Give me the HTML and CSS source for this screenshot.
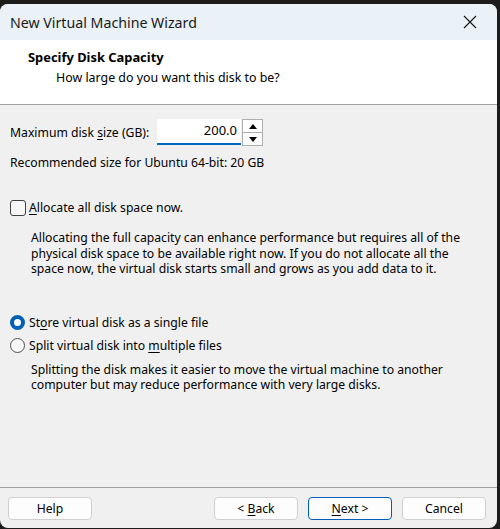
FILE: index.html
```html
<!DOCTYPE html>
<html lang="en">
<head>
  <meta charset="UTF-8" />
  <title>New Virtual Machine Wizard</title>
  <link rel="stylesheet" href="styles.css">
</head>
<body>
  <div class="window">
    <div class="titlebar">
      <span class="title">New Virtual Machine Wizard</span>
      <svg class="close" width="14" height="14" viewBox="0 0 14 14">
        <path d="M1 1 L13 13 M13 1 L1 13" stroke="#1a1a1a" stroke-width="1.2" fill="none"/>
      </svg>
    </div>

    <div class="header">
      <div class="heading">Specify Disk Capacity</div>
      <div class="subheading">How large do you want this disk to be?</div>
    </div>

    <div class="content">
      <div class="size-row">
        <span>Maximum disk <u>s</u>ize (GB):</span>
        <div class="spin">
          <div class="spin-input">200.0</div>
          <div class="spin-buttons">
            <div class="spin-btn"><span class="tri-up"></span></div>
            <div class="spin-btn"><span class="tri-down"></span></div>
          </div>
        </div>
      </div>
      <p class="recommend">Recommended size for Ubuntu 64-bit: 20 GB</p>

      <div class="option check-row">
        <span class="checkbox"></span>
        <span><u>A</u>llocate all disk space now.</span>
      </div>
      <p class="note">Allocating the full capacity can enhance performance but requires all of the physical disk space to be available right now. If you do not allocate all the space now, the virtual disk starts small and grows as you add data to it.</p>

      <div class="option radio-first">
        <span class="radio checked"></span>
        <span>St<u>o</u>re virtual disk as a single file</span>
      </div>
      <div class="option radio-second">
        <span class="radio"></span>
        <span>Split virtual disk into <u>m</u>ultiple files</span>
      </div>
      <p class="note note-split">Splitting the disk makes it easier to move the virtual machine to another computer but may reduce performance with very large disks.</p>
    </div>

    <div class="footer">
      <button class="btn">Help</button>
      <div class="nav">
        <button class="btn">&lt; <u>B</u>ack</button>
        <button class="btn default"><u>N</u>ext &gt;</button>
        <button class="btn">Cancel</button>
      </div>
    </div>
  </div>
</body>
</html>
```

FILE: styles.css
```css
html, body {
  margin: 0;
  padding: 0;
  background: #1c1c1c;
  height: 529px;
  overflow: hidden;
}
body {
  font-family: "Noto Sans", "Liberation Sans", sans-serif;
  font-size: 12.2px;
  color: #000;
}
u {
  text-decoration-thickness: 1px;
  text-underline-offset: 2px;
}
.window {
  margin-top: 4px;
  width: 497px;
  height: 524px;
  border-radius: 8px;
  background: #f0f0f0;
  overflow: hidden;
  display: flex;
  flex-direction: column;
}
.titlebar {
  height: 36px;
  background: #eaf1f7;
  display: flex;
  align-items: center;
  justify-content: space-between;
  padding: 0 20px 0 10px;
}
.title {
  font-size: 14.2px;
  color: #1a1a1a;
}
.header {
  height: 64px;
  background: #fff;
  border-bottom: 1px solid #a0a0a0;
  padding: 0 0 0 28px;
  box-sizing: content-box;
}
.heading {
  font-weight: bold;
  font-size: 12.9px;
  margin-top: 9px;
  line-height: 17px;
}
.subheading {
  margin: 3px 0 0 28px;
  line-height: 17px;
  font-size: 12.4px;
}
.content {
  flex: 1;
  padding: 14px 10px 0 10px;
}
.size-row {
  display: flex;
  align-items: center;
}
.size-row > span {
  width: 147px;
}
.spin {
  display: flex;
}
.spin-input {
  width: 80px;
  height: 24px;
  background: #fff;
  border-bottom: 2px solid #0067c0;
  text-align: right;
  padding-right: 4px;
  line-height: 22px;
  font-size: 13px;
}
.spin-buttons {
  display: flex;
  flex-direction: column;
  margin-left: 1px;
  border: 1px solid #adadad;
  width: 19px;
  height: 25px;
}
.spin-btn {
  flex: 1;
  background: #fdfdfd;
  display: flex;
  align-items: center;
  justify-content: center;
}
.spin-btn + .spin-btn {
  border-top: 1px solid #adadad;
}
.tri-up {
  border-left: 4px solid transparent;
  border-right: 4px solid transparent;
  border-bottom: 5px solid #000;
}
.tri-down {
  border-left: 4px solid transparent;
  border-right: 4px solid transparent;
  border-top: 5px solid #000;
}
.recommend {
  margin: 8px 0 0 0;
  line-height: 17px;
}
.option {
  display: flex;
  align-items: center;
  line-height: 17px;
}
.check-row {
  margin-top: 28px;
}
.checkbox {
  width: 14px;
  height: 14px;
  border: 1px solid #404040;
  border-radius: 3px;
  background: #f7f7f7;
  margin-right: 3px;
}
.radio {
  box-sizing: border-box;
  width: 15px;
  height: 15px;
  border: 1px solid #505050;
  border-radius: 50%;
  background: #f7f7f7;
  margin-right: 4px;
}
.radio.checked {
  border: 4.5px solid #005fb8;
  background: #fff;
}
.note {
  margin: 14px 0 0 21px;
  line-height: 15.5px;
  width: 446px;
}
.radio-first {
  margin-top: 37px;
}
.radio-second {
  margin-top: 6px;
}
.note-split {
  margin-top: 8px;
}
.footer {
  border-top: 1px solid #a0a0a0;
  height: 40px;
  display: flex;
  align-items: center;
  justify-content: space-between;
  padding: 0 11px 0 8px;
}
.nav {
  display: flex;
  gap: 10px;
}
.btn {
  width: 84px;
  height: 23px;
  background: #fdfdfd;
  border: 1px solid #d0d0d0;
  border-radius: 4px;
  font-family: inherit;
  font-size: 12.2px;
  color: #000;
  padding: 0;
}
.btn.default {
  border-color: #005fb8;
}
```
